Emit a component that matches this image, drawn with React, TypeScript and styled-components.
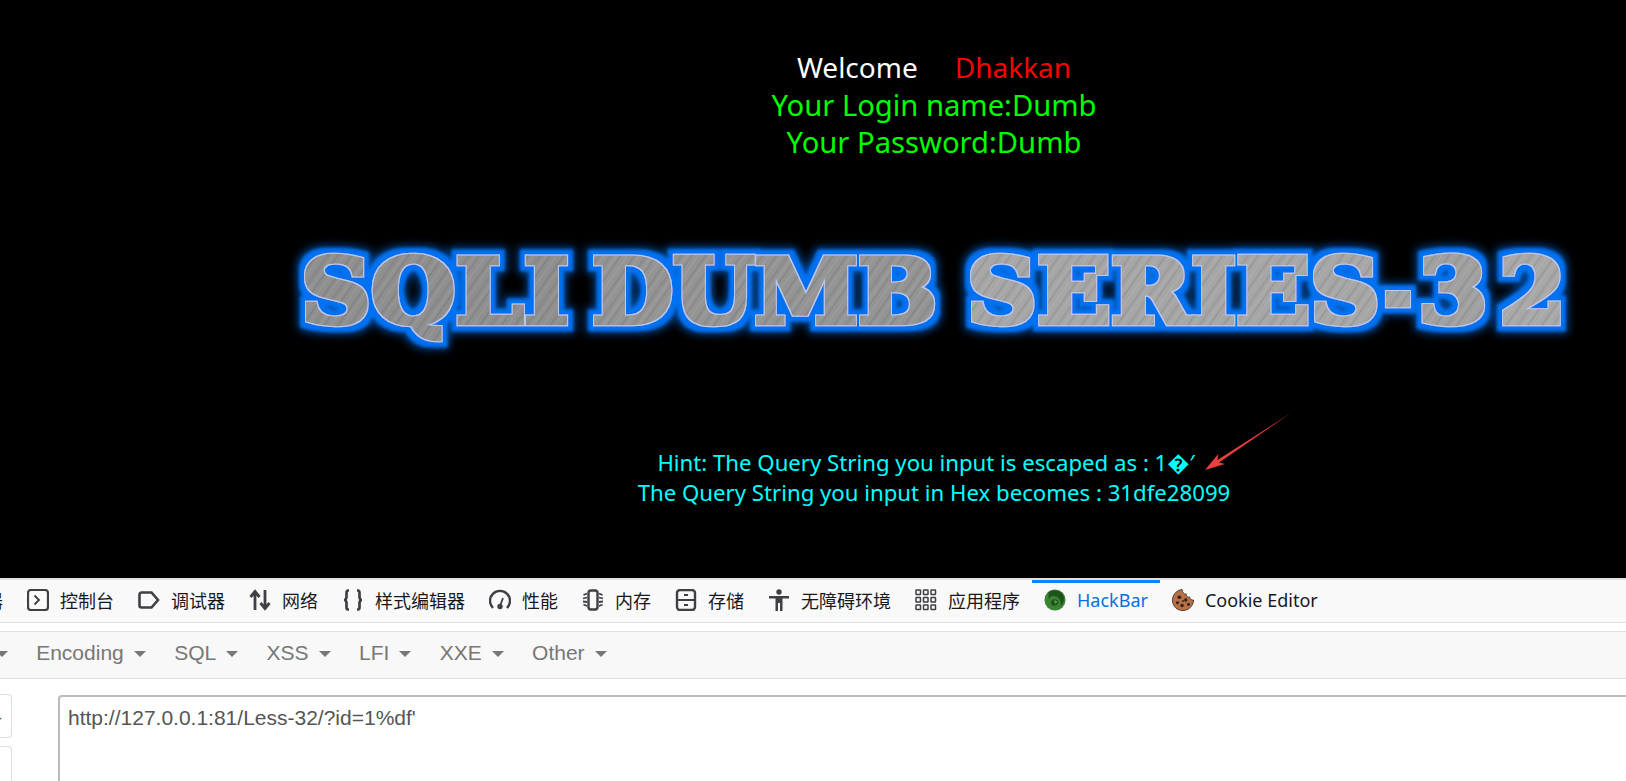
import React from 'react';
import styled, { createGlobalStyle } from 'styled-components';

const GlobalStyle = createGlobalStyle`
html,
body {
    margin: 0;
    height: 100%;
    overflow: hidden;
    background: #000;
}
#root {
    height: 100%;
}
`;

const Page = styled.div`
    height: 781px;
    width: 1626px;
    display: flex;
    flex-direction: column;
    overflow: hidden;
    position: relative;
`;
const Site = styled.main`
    height: 578px;
    flex: none;
    background: #000;
    padding-left: 242px;
    padding-top: 49px;
    box-sizing: border-box;
    text-align: center;
    font-family: 'Noto Sans', 'Open Sans', sans-serif;
`;
const LoginLine = styled.div<{ $color?: string; $size?: number }>`
    font-size: ${(p) => p.$size || 29.2}px;
    line-height: 37.5px;
    color: ${(p) => p.$color || '#0f0'};
    white-space: pre;
`;
const Red = styled.span`
    color: #f00;
    margin-left: 37px;
`;
const Banner = styled.svg`
    display: block;
    margin: 62px auto 0;
    width: 1340px;
    height: 140px;
`;
const HintBlock = styled.div`
    margin-top: 84px;
    font-size: 22.2px;
    line-height: 30px;
    color: #0ff;
`;
const EscapedLine = styled.div`
    padding-right: 16px;
`;
const Arrow = styled.svg`
    position: absolute;
    left: 1199px;
    top: 409px;
    width: 96px;
    height: 66px;
`;

const Devtools = styled.section`
    flex: 1;
    min-height: 0;
    background: #fff;
    display: flex;
    flex-direction: column;
    overflow: hidden;
`;
const TabStrip = styled.nav`
    height: 42px;
    flex: none;
    background: #f9f9fa;
    border-top: 2px solid #e0e0e2;
    border-bottom: 1px solid #e0e0e2;
    display: flex;
    padding-left: 15px;
`;
const Tab = styled.div<{ $active?: boolean; $first?: boolean }>`
    flex: none;
    display: flex;
    align-items: center;
    gap: 11px;
    padding: 0 12px 5px;
    box-sizing: border-box;
    margin-left: ${(p) => (p.$first ? '-111px' : '0')};
    border-top: 3px solid ${(p) => (p.$active ? '#0a84ff' : 'transparent')};
    color: ${(p) => (p.$active ? '#0a6fe0' : '#18181a')};
    font-family: 'Noto Sans', 'Noto Sans CJK SC', sans-serif;
    font-size: 18px;
`;
const TabIcon = styled.svg`
    width: 22px;
    height: 22px;
    flex: none;
    color: #3f3f44;
`;
const Spacer = styled.div`
    height: 8px;
    flex: none;
`;
const Toolbar = styled.div`
    height: 46px;
    flex: none;
    background: #f8f8f8;
    border-top: 1px solid #e0e0e0;
    border-bottom: 1px solid #e0e0e0;
    display: flex;
    align-items: center;
`;
const Menu = styled.div<{ $first?: boolean }>`
    flex: none;
    display: flex;
    align-items: center;
    gap: 10px;
    padding: 0 14.2px 4px;
    margin-left: ${(p) => (p.$first ? '-127.6px' : '0')};
    color: #777;
    font-family: 'Liberation Sans', Arial, sans-serif;
    font-size: 21px;
`;
const Caret = styled.span`
    width: 0;
    height: 0;
    margin-top: 2px;
    border-left: 6px solid transparent;
    border-right: 6px solid transparent;
    border-top: 6px solid #777;
`;
const Body = styled.div`
    flex: 1;
    min-height: 0;
    display: flex;
    gap: 46px;
    padding-top: 16px;
`;
const SideButtons = styled.div`
    flex: none;
    width: 12px;
    margin-top: -1px;
    display: flex;
    flex-direction: column;
    gap: 8px;
`;
const SideButton = styled.div`
    height: 42px;
    flex: none;
    border: 1px solid #ddd;
    border-left: 0;
    border-radius: 0 4px 4px 0;
    color: #555;
    font-family: 'Liberation Sans', Arial, sans-serif;
    font-size: 18px;
    line-height: 46px;
    overflow: hidden;
    text-align: left;
    text-indent: -4px;
`;
const UrlBox = styled.div`
    flex: none;
    width: 1600px;
    height: 120px;
    box-sizing: border-box;
    padding: 9px 8px;
    background: #fff;
    border: 1px solid #ccc;
    border-top: 2px solid #bbb;
    border-left: 2px solid #bbb;
    border-radius: 4px;
    color: #555;
    font-family: 'Liberation Sans', Arial, sans-serif;
    font-size: 21px;
    line-height: 24px;
`;

const ConsoleIcon = () => (
    <TabIcon viewBox="0 0 22 22" fill="none" stroke="currentColor" strokeWidth="2.2">
        <rect x="1" y="1" width="20" height="20" rx="3" />
        <path d="M7.500 6.500l4.500 4.500-4.500 4.500" strokeWidth="1.800" />
    </TabIcon>
);
const DebuggerIcon = () => (
    <TabIcon viewBox="0 0 22 22" fill="none" stroke="currentColor" strokeWidth="2.600">
        <path d="M3.500 3.500h10l6.500 7.500-6.500 7.500h-10a2 2 0 0 1-2-2v-11a2 2 0 0 1 2-2z" />
    </TabIcon>
);
const NetworkIcon = () => (
    <TabIcon viewBox="0 0 22 22" fill="none" stroke="currentColor" strokeWidth="2.800">
        <path d="M6 21V3M1.500 8L6 2.500 10.500 8M16 1v18M11.500 14l4.500 5.500 4.500-5.500" />
    </TabIcon>
);
const StyleIcon = () => (
    <TabIcon viewBox="0 0 22 22" fill="none" stroke="currentColor" strokeWidth="2.700">
        <path d="M7 1.500H6C4.500 1.500 4.500 3 4.500 4v4c0 1.500-1 3-2.500 3 1.500 0 2.500 1.500 2.500 3v4c0 1 0 2.500 1.500 2.500h1" />
        <path d="M15 1.500h1c1.500 0 1.500 1.500 1.500 2.500v4c0 1.500 1 3 2.500 3-1.500 0-2.500 1.500-2.500 3v4c0 1 0 2.500-1.500 2.500h-1" />
    </TabIcon>
);
const PerformanceIcon = () => (
    <TabIcon viewBox="0 0 22 22" fill="none" stroke="currentColor" strokeWidth="2.400">
        <path d="M4 19A10 10 0 1 1 18 19" />
        <path d="M14 9l-3 8" strokeWidth="1.800" />
        <circle cx="11" cy="17.500" r="2.700" fill="currentColor" stroke="none" />
    </TabIcon>
);
const MemoryIcon = () => (
    <TabIcon viewBox="0 0 22 22" fill="none" stroke="currentColor" strokeWidth="1.800">
        <rect x="6.500" y="1.500" width="9" height="19" rx="2.500" strokeWidth="2.400" />
        <path d="M5 4.500L1.500 6M5 8.500L1 9.500M5 13L1 12.500M5 17l-3.500-1.500M17 4.500L20.500 6M17 8.500l4 1M17 13l4-.5M17 17l3.500-1.500" />
    </TabIcon>
);
const StorageIcon = () => (
    <TabIcon viewBox="0 0 22 22" fill="none" stroke="currentColor" strokeWidth="2.400">
        <rect x="2" y="1" width="18" height="20" rx="3" />
        <path d="M2 11h18M9 6h4M9 16h4" strokeWidth="2" />
    </TabIcon>
);
const AccessibilityIcon = () => (
    <TabIcon viewBox="0 0 22 22" fill="currentColor">
        <circle cx="11" cy="3" r="2.700" />
        <path d="M1 7h20v2.600h-6.500V22h-2.500v-8h-2v8H7.500V9.600H1z" />
    </TabIcon>
);
const AppsIcon = () => (
    <TabIcon viewBox="0 0 22 22" fill="none" stroke="currentColor" strokeWidth="1.500">
        {[1, 8.500, 16].map((y) =>
            [1, 8.500, 16].map((x) => (
                <rect key={`${x}-${y}`} x={x} y={y} width="4.500" height="4.500" rx="0.500" />
            )),
        )}
    </TabIcon>
);
const HackBarIcon = () => (
    <TabIcon viewBox="0 0 24 24">
        <circle cx="12" cy="12" r="11.500" fill="#3a8434" />
        <path d="M5 3c5-3 12-2 15 2 3 5 2 11-2 14 1-4 0-7-2-9-2-2-5-3-7-2-2 0-3 2-4 3 0-3 0-5 0-8z" fill="#1f541d" />
        <path d="M8 13c3-3 7-2 8 1 0 3-3 5-6 4-2 0-3-3-2-5z" fill="#1f541d" />
        <path d="M11 12l4 2-3 2z" fill="#58a552" />
    </TabIcon>
);
const CookieIcon = () => (
    <TabIcon viewBox="0 0 24 24">
        <path d="M11 .5C7 1 1 4 .5 12c0 7 5 11.500 11.500 11.500S23.500 18 23.500 12c-2 .5-4-1-4-3-3 .5-4.500-2-4-3.500C13 6 11 3 11 .5z" fill="#b96f45" stroke="#4b3a30" strokeWidth="1" />
        <g fill="#2b211c">
            <circle cx="8" cy="9" r="2" />
            <circle cx="15" cy="12" r="1.800" />
            <circle cx="6" cy="15" r="1.600" />
            <circle cx="11" cy="18" r="1.800" />
            <circle cx="18" cy="17" r="1.600" />
            <circle cx="12" cy="13" r="1" />
        </g>
    </TabIcon>
);

const TABS = [
    { name: '查看器', icon: <ConsoleIcon /> },
    { name: '控制台', icon: <ConsoleIcon /> },
    { name: '调试器', icon: <DebuggerIcon /> },
    { name: '网络', icon: <NetworkIcon /> },
    { name: '样式编辑器', icon: <StyleIcon /> },
    { name: '性能', icon: <PerformanceIcon /> },
    { name: '内存', icon: <MemoryIcon /> },
    { name: '存储', icon: <StorageIcon /> },
    { name: '无障碍环境', icon: <AccessibilityIcon /> },
    { name: '应用程序', icon: <AppsIcon /> },
    { name: 'HackBar', icon: <HackBarIcon />, active: true },
    { name: 'Cookie Editor', icon: <CookieIcon /> },
];
const MENUS = ['Encryption', 'Encoding', 'SQL', 'XSS', 'LFI', 'XXE', 'Other'];

// banner words: x and width are read off the reference, minus the svg's left edge (264)
const BANNER_WORDS = [
    { text: 'SQLI', x: 37, width: 268, base: '#8f8f8f' },
    { text: 'DUMB', x: 328, width: 345, base: '#949494' },
    { text: 'SERIES', x: 703, width: 413, base: '#a6a6a6' },
    { text: '-', x: 1120, width: 28, base: '#a4a4a4' },
    { text: '3', x: 1154, width: 70, base: '#a0a0a0' },
    { text: '2', x: 1235, width: 67, base: '#a8a8a8' },
];

const BannerLogo = () => (
    <Banner viewBox="0 0 1340 140">
        <defs>
            {BANNER_WORDS.map((w, i) => (
                <pattern key={w.text} id={`brushed-${i}`} width="29" height="29" patternUnits="userSpaceOnUse" patternTransform="rotate(35)">
                    <rect width="29" height="29" fill={w.base} />
                    <rect x="2" width="1.500" height="29" fill="#000" opacity="0.1" />
                    <rect x="6" width="0.800" height="29" fill="#fff" opacity="0.1" />
                    <rect x="11" width="2.500" height="29" fill="#000" opacity="0.06" />
                    <rect x="16.500" width="0.800" height="29" fill="#fff" opacity="0.14" />
                    <rect x="20" width="1" height="29" fill="#000" opacity="0.12" />
                    <rect x="25" width="1.500" height="29" fill="#fff" opacity="0.07" />
                </pattern>
            ))}
            <filter id="glow" x="-5%" y="-30%" width="110%" height="160%">
                <feMorphology in="SourceAlpha" operator="dilate" radius="0.700" result="rim" />
                <feFlood floodColor="#dfe6ee" floodOpacity="0.7" />
                <feComposite in2="rim" operator="in" result="light" />
                <feMorphology in="SourceAlpha" operator="dilate" radius="6" result="fat" />
                <feGaussianBlur in="fat" stdDeviation="1.500" result="edge" />
                <feFlood floodColor="#0671f0" />
                <feComposite in2="edge" operator="in" result="outline" />
                <feMorphology in="SourceAlpha" operator="dilate" radius="8" result="fatter" />
                <feGaussianBlur in="fatter" stdDeviation="4" result="soft" />
                <feFlood floodColor="#0a5fc8" floodOpacity="0.75" />
                <feComposite in2="soft" operator="in" result="halo" />
                <feMerge>
                    <feMergeNode in="halo" />
                    <feMergeNode in="outline" />
                    <feMergeNode in="light" />
                    <feMergeNode in="SourceGraphic" />
                </feMerge>
            </filter>
        </defs>
        <g filter="url(#glow)" fontFamily="'DejaVu Serif', serif" fontWeight="bold" fontSize="90">
            {BANNER_WORDS.map((w, i) => (
                <text
                    key={w.text}
                    x={w.x}
                    y="99"
                    textLength={w.width}
                    lengthAdjust="spacingAndGlyphs"
                    fill={`url(#brushed-${i})`}
                    stroke={`url(#brushed-${i})`}
                    strokeWidth="4.500"
                    strokeLinejoin="miter"
                >
                    {w.text}
                </text>
            ))}
        </g>
    </Banner>
);

export default function App() {
    return (
        <Page>
            <GlobalStyle />
            <Site>
                <LoginLine $color="#fff" $size={28}>
                    Welcome<Red>Dhakkan</Red>
                </LoginLine>
                <LoginLine>Your Login name:Dumb</LoginLine>
                <LoginLine>Your Password:Dumb</LoginLine>
                <BannerLogo />
                <HintBlock>
                    <EscapedLine>Hint: The Query String you input is escaped as : 1&#xFFFD;&#x2032;</EscapedLine>
                    <div>The Query String you input in Hex becomes : 31dfe28099</div>
                </HintBlock>
            </Site>
            <Arrow viewBox="0 0 96 66">
                <path d="M6 61L19.300 45 18.500 51 92 4 20.100 53.400 25.900 55z" fill="#ee3f3f" />
            </Arrow>
            <Devtools>
                <TabStrip>
                    {TABS.map((tab, i) => (
                        <Tab key={tab.name} $active={tab.active} $first={i === 0}>
                            {tab.icon}
                            <span>{tab.name}</span>
                        </Tab>
                    ))}
                </TabStrip>
                <Spacer />
                <Toolbar>
                    {MENUS.map((menu, i) => (
                        <Menu key={menu} $first={i === 0}>
                            <span>{menu}</span>
                            <Caret />
                        </Menu>
                    ))}
                </Toolbar>
                <Body>
                    <SideButtons>
                        <SideButton>-</SideButton>
                        <SideButton />
                    </SideButtons>
                    <UrlBox>http://127.0.0.1:81/Less-32/?id=1%df'</UrlBox>
                </Body>
            </Devtools>
        </Page>
    );
}
